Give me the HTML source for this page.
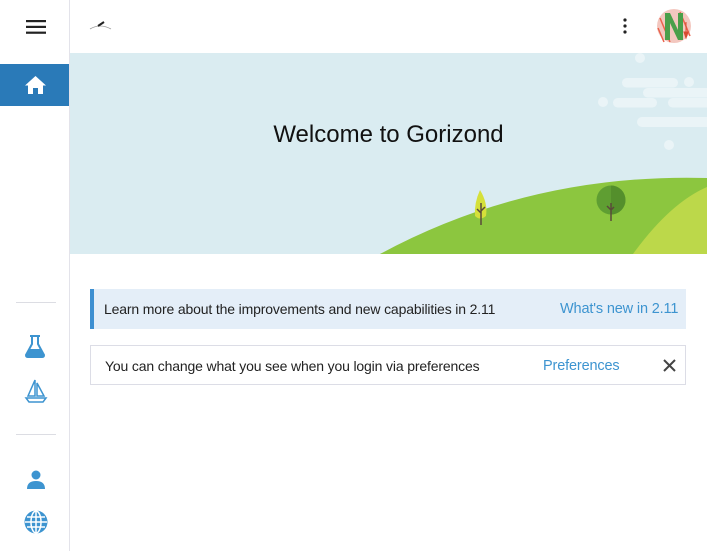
<!DOCTYPE html>
<html><head><style>
body{margin:0;width:707px;height:551px;overflow:hidden;background:#fff;font-family:"Liberation Sans",sans-serif;position:relative}
.side{position:absolute;left:0;top:0;width:69px;height:551px;border-right:1px solid #e3e3ea;background:#fff}
.hr{position:absolute;left:16px;width:40px;height:1px;background:#dcdde3}
.banner{position:absolute;left:70px;top:53px;width:637px;height:201px;background:#daecf1;overflow:hidden}
.n{position:absolute;left:90px;width:596px;height:40px;box-sizing:border-box;font-size:14px;letter-spacing:-0.15px;color:#222;line-height:40px}
.n a{position:absolute;color:#3d94d0;text-decoration:none;font-size:14.5px}
</style></head><body>
<div class="side">
 <svg style="position:absolute;left:26px;top:19px" width="20" height="16"><rect y="1" width="20" height="2.2" fill="#222"/><rect y="6.8" width="20" height="2.2" fill="#222"/><rect y="12.6" width="20" height="2.2" fill="#222"/></svg>
 <div style="position:absolute;left:0;top:64px;width:69px;height:42px;background:#2a7ab8"></div>
 <svg style="position:absolute;left:25px;top:76px" width="21" height="18"><path d="M10.5 0 L21 9.5 H18 V18 H13 V12 H8 V18 H3 V9.5 H0 Z" fill="#fff"/></svg>
 <div class="hr" style="top:302px"></div>
 <div class="hr" style="top:434px"></div>
 <svg style="position:absolute;left:25px;top:335px" width="20" height="24"><path d="M5 1 H15 M7 1 V9 L1 20 Q1 22 3 22 H17 Q19 22 19 20 L13 9 V1" fill="none" stroke="#3d94d0" stroke-width="2"/><path d="M4 14 H16 L19 20 Q19 22 17 22 H3 Q1 22 1 20 Z" fill="#3d94d0"/></svg>
 <svg style="position:absolute;left:24px;top:379px" width="24" height="24"><path d="M11 1 V17 H4 Z M13 4 L20 17 H13 Z" fill="none" stroke="#3d94d0" stroke-width="1.5"/><path d="M2 19 H22 L19 23 H5 Z" fill="none" stroke="#3d94d0" stroke-width="1.5"/></svg>
 <svg style="position:absolute;left:26px;top:470px" width="20" height="19"><circle cx="10" cy="5" r="4.5" fill="#3d94d0"/><path d="M1 19 Q1 11 10 11 Q19 11 19 19 Z" fill="#3d94d0"/></svg>
 <svg style="position:absolute;left:24px;top:510px" width="24" height="24"><circle cx="12" cy="12" r="11.5" fill="#3d94d0"/><g stroke="#fff" stroke-width="1.5" fill="none"><path d="M12 1 V23 M1 12 H23 M3 7 H21 M3 17 H21"/><ellipse cx="12" cy="12" rx="5" ry="11"/></g></svg>
</div>
<svg style="position:absolute;left:89px;top:18px" width="24" height="14"><path d="M1 11 Q11 5 22 11" fill="none" stroke="#999" stroke-width="0.8"/><path d="M9 8 L15 4" stroke="#222" stroke-width="2"/></svg>
<svg style="position:absolute;left:622px;top:17px" width="6" height="18"><circle cx="3" cy="3" r="1.6" fill="#222"/><circle cx="3" cy="9" r="1.6" fill="#222"/><circle cx="3" cy="15" r="1.6" fill="#222"/></svg>
<svg style="position:absolute;left:656px;top:8px" width="38" height="36"><circle cx="18" cy="18" r="17" fill="#f3c7bf"/><path d="M4 10 L14 34 M2 20 L8 34 M24 4 L34 28" stroke="#e9624c" stroke-width="1.5"/><path d="M9 5 H14 L22 22 V5 H27 V32 H22 L14 15 V32 H9 Z" fill="#4a9f4a"/><path d="M30 14 V30 M28 24 L32 24 L30 30 Z" stroke="#d84a30" fill="#d84a30"/></svg>
<div class="banner">
 <svg width="637" height="201" style="position:absolute;left:0;top:0">
  <g fill="#eaf4f7">
   <circle cx="570" cy="5" r="5"/><circle cx="619" cy="29" r="5"/><circle cx="533" cy="49" r="5"/><circle cx="599" cy="92" r="5"/>
   <rect x="552" y="25" width="56" height="9.5" rx="4.75"/>
   <rect x="573" y="35" width="70" height="9.5" rx="4.75"/>
   <rect x="543" y="45" width="44" height="9.5" rx="4.75"/>
   <rect x="598" y="45" width="45" height="9.5" rx="4.75"/>
   <rect x="567" y="64" width="75" height="10" rx="5"/>
  </g>
  <path d="M310 201 Q460 120 637 125 V201 Z" fill="#8cc63f"/>
  <path d="M563 201 Q600 150 637 134 V201 Z" fill="#bcd84a"/>
  <path d="M410 137 Q404 150 405 163 Q410 168 416 163 Q418 150 410 137 Z" fill="#d5e03a"/>
  <path d="M411 150 V172 M411 160 L407 156 M411 158 L415 154" stroke="#5a4a3a" stroke-width="1.5" fill="none"/>
  <circle cx="541" cy="147" r="14.5" fill="#5f9e32"/>
  <path d="M541 132.5 A14.5 14.5 0 0 1 541 161.5 Z" fill="#548f2c"/>
  <path d="M541 150 V168 M541 157 L537 153 M541 157 L544 154" stroke="#5a4a3a" stroke-width="1.5" fill="none"/>
 </svg>
 <div style="position:absolute;left:0;width:637px;top:68px;text-align:center;font-size:24px;color:#111">Welcome to Gorizond</div>
</div>
<div class="n" style="top:289px;background:#e4eef8;border-left:4px solid #3d8fd1;padding-left:10px">Learn more about the improvements and new capabilities in 2.11<a style="left:466px">What's new in 2.11</a></div>
<div class="n" style="top:345px;border:1px solid #dcdde6;padding-left:14px">You can change what you see when you login via preferences<a style="left:452px">Preferences</a>
 <svg style="position:absolute;left:572px;top:13px" width="13" height="13"><path d="M1 1 L12 12 M12 1 L1 12" stroke="#444" stroke-width="2"/></svg></div>
</body></html>
